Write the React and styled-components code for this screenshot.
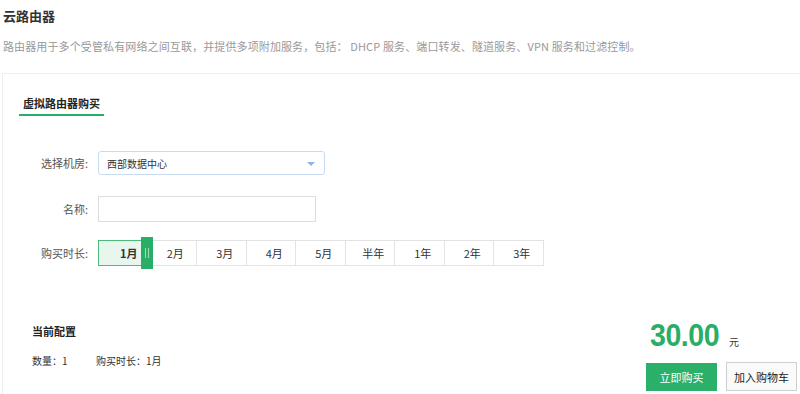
import React from "react";
import styled, { createGlobalStyle } from "styled-components";

const GlobalStyle = createGlobalStyle`
  body {
    margin: 0;
    background: #fff;
    font-family: "Noto Sans CJK SC", "Liberation Sans", sans-serif;
    color: #333;
  }
`;

const Page = styled.div`
  width: 800px;
  height: 394px;
  overflow: hidden;
  padding-left: 3px;
  box-sizing: border-box;
`;

const Title = styled.h1`
  margin: 0;
  padding-top: 8px;
  font-size: 13px;
  line-height: 16px;
  font-weight: 700;
  color: #333;
`;

const Desc = styled.p`
  margin: 15px 0 0;
  font-size: 11px;
  line-height: 14px;
  letter-spacing: 0.12px;
  color: #999;
`;

const Panel = styled.section`
  margin: 20px 0 0 -1px;
  border-top: 1px solid #eee;
  border-left: 1px solid #eee;
  height: 400px;
`;

const TabBar = styled.div`
  display: flex;
  padding: 22px 0 0 16px;
`;

const Tab = styled.div`
  padding: 0 4px 4px;
  font-size: 11px;
  line-height: 14px;
  font-weight: 700;
  color: #222;
  border-bottom: 2px solid ${(p) => (p.$active ? "#2aae67" : "transparent")};
`;

const Form = styled.div`
  margin-top: 35px;
`;

const Row = styled.div`
  display: flex;
  align-items: center;
  margin-top: ${(p) => p.$gap || 0}px;
`;

const Label = styled.label`
  width: 85px;
  margin-right: 10px;
  text-align: right;
  font-size: 11px;
  color: #555;
`;

const Select = styled.div`
  position: relative;
  width: 227px;
  height: 24px;
  box-sizing: border-box;
  border: 1px solid #c8dcf1;
  border-radius: 3px;
  padding-left: 8px;
  display: flex;
  align-items: center;
  font-size: 10px;
  color: #333;
`;

const Caret = styled.span`
  position: absolute;
  right: 9px;
  top: 10px;
  width: 0;
  height: 0;
  border-left: 4px solid transparent;
  border-right: 4px solid transparent;
  border-top: 4px solid #8eb6e3;
`;

const Input = styled.input`
  width: 218px;
  height: 26px;
  box-sizing: border-box;
  border: 1px solid #ddd;
  outline: none;
  padding: 0 6px;
`;

const Track = styled.div`
  position: relative;
  display: flex;
  height: 32px;
  align-items: center;
`;

const Segment = styled.div`
  width: 49.5px;
  height: 26px;
  box-sizing: border-box;
  display: flex;
  align-items: center;
  justify-content: center;
  padding-left: ${(p) => (p.$active ? 12 : 7)}px;
  font-size: 11px;
  font-weight: ${(p) => (p.$active ? 700 : 400)};
  color: #333;
  background: ${(p) => (p.$active ? "#e7f7ed" : "#fff")};
  border: 1px solid ${(p) => (p.$active ? "#4fbb7b" : "#e3e3e3")};
  border-left-width: ${(p) => (p.$first ? 1 : 0)}px;
`;

const Thumb = styled.div`
  position: absolute;
  left: 43px;
  top: 0;
  width: 12px;
  height: 32px;
  background: #2aae67;
  display: flex;
  justify-content: center;
  align-items: center;
  gap: 2px;

  &::before,
  &::after {
    content: "";
    width: 1px;
    height: 10px;
    background: #9fdcb9;
  }
`;

const Bottom = styled.div`
  display: flex;
  justify-content: space-between;
  margin-top: 47px;
`;

const Summary = styled.div`
  padding: 8px 0 0 29px;
`;

const SummaryTitle = styled.div`
  font-size: 11px;
  line-height: 14px;
  font-weight: 700;
  color: #222;
`;

const SummaryLine = styled.div`
  display: flex;
  margin-top: 16px;
  font-size: 10px;
  line-height: 14px;
  color: #333;
`;

const SummaryItem = styled.span`
  width: ${(p) => p.$w || "auto"};
`;

const Order = styled.div`
  display: flex;
  flex-direction: column;
  margin-right: 3px;
`;

const PriceRow = styled.div`
  display: flex;
  align-items: baseline;
  padding-left: 4px;
  height: 46px;
`;

const Price = styled.span`
  display: inline-block;
  font-family: "Liberation Sans", Arial, sans-serif;
  font-size: 31px;
  line-height: 40px;
  font-weight: 700;
  color: #2aae67;
  transform: scaleX(0.92);
  transform-origin: left;
  letter-spacing: -0.5px;
`;

const Unit = styled.span`
  margin-left: 4px;
  font-size: 10px;
  color: #333;
`;

const Buttons = styled.div`
  display: flex;
  gap: 9px;
  align-items: flex-start;
`;

const Button = styled.button`
  width: 71px;
  height: ${(p) => (p.$primary ? 28 : 29)}px;
  font-family: "Noto Sans CJK SC", sans-serif;
  font-size: 11px;
  cursor: pointer;
  color: ${(p) => (p.$primary ? "#fff" : "#222")};
  background: ${(p) => (p.$primary ? "#2bb06a" : "#fafafa")};
  border: 1px solid ${(p) => (p.$primary ? "#2bb06a" : "#cfcfcf")};
  margin-top: ${(p) => (p.$primary ? 1 : 0)}px;
  padding: 0;
`;

const periods = ["1月", "2月", "3月", "4月", "5月", "半年", "1年", "2年", "3年"];

export default function App() {
  return (
    <Page>
      <GlobalStyle />
      <Title>云路由器</Title>
      <Desc>
        路由器用于多个受管私有网络之间互联，并提供多项附加服务，包括： DHCP 服务、端口转发、隧道服务、VPN 服务和过滤控制。
      </Desc>
      <Panel>
        <TabBar>
          <Tab $active>虚拟路由器购买</Tab>
        </TabBar>
        <Form>
          <Row>
            <Label>选择机房:</Label>
            <Select>
              西部数据中心
              <Caret />
            </Select>
          </Row>
          <Row $gap={21}>
            <Label>名称:</Label>
            <Input />
          </Row>
          <Row $gap={15}>
            <Label>购买时长:</Label>
            <Track>
              {periods.map((p, i) => (
                <Segment key={p} $active={i === 0} $first={i === 0}>
                  {p}
                </Segment>
              ))}
              <Thumb />
            </Track>
          </Row>
        </Form>
        <Bottom>
          <Summary>
            <SummaryTitle>当前配置</SummaryTitle>
            <SummaryLine>
              <SummaryItem $w="64px">数量：1</SummaryItem>
              <SummaryItem>购买时长：1月</SummaryItem>
            </SummaryLine>
          </Summary>
          <Order>
            <PriceRow>
              <Price>30.00</Price>
              <Unit>元</Unit>
            </PriceRow>
            <Buttons>
              <Button $primary>立即购买</Button>
              <Button>加入购物车</Button>
            </Buttons>
          </Order>
        </Bottom>
      </Panel>
    </Page>
  );
}
